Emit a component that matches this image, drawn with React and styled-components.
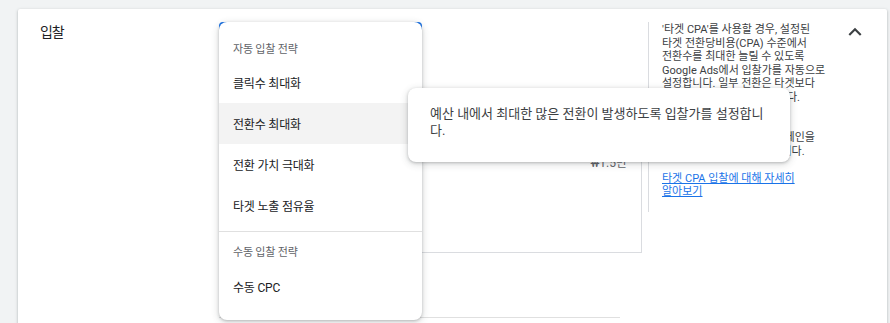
import React from "react";
import styled, { createGlobalStyle } from "styled-components";

const GlobalStyle = createGlobalStyle`
  body {
    margin: 0;
    background: #f1f3f4;
    font-family: Roboto, "Noto Sans CJK KR", sans-serif;
    color: #202124;
    overflow: hidden;
  }
`;

const Page = styled.div`
  padding: 9px 3px 0 18px;
  height: 323px;
  box-sizing: border-box;
`;

const Card = styled.div`
  background: #fff;
  border-radius: 2px 2px 0 0;
  box-shadow: 0 1px 2px rgba(60, 64, 67, 0.25), 0 1px 3px 1px rgba(60, 64, 67, 0.1);
  height: 330px;
  padding: 13px 0 0 22px;
  box-sizing: border-box;
  display: grid;
  grid-template-columns: 179px 423px 187px 1fr;
`;

const Label = styled.div`
  font-size: 14px;
  letter-spacing: -1.2px;
  line-height: 20px;
  color: #202124;
`;

const Middle = styled.div`
  position: relative;
`;

const Select = styled.div`
  width: 203px;
  height: 36px;
  border: 2px solid #1a73e8;
  border-radius: 4px;
  box-sizing: border-box;
`;

const Menu = styled.div`
  position: absolute;
  top: 0;
  left: 0;
  width: 203px;
  background: #fff;
  border-radius: 8px;
  padding-bottom: 13px;
  box-shadow: 0 1px 3px rgba(60, 64, 67, 0.3), 0 2px 6px 2px rgba(60, 64, 67, 0.12);
  z-index: 2;
`;

const GroupHeader = styled.div`
  padding: ${(p) => (p.first ? "20px 14px 4px" : "13px 14px 5px")};
  font-size: 11px;
  letter-spacing: -0.2px;
  line-height: 16px;
  color: #5f6368;
`;

const Item = styled.div`
  height: 41px;
  display: flex;
  align-items: center;
  padding-left: 14px;
  font-size: 12px;
  letter-spacing: -0.2px;
  color: #202124;
  background: ${(p) => (p.active ? "#f3f3f3" : "transparent")};
`;

const Divider = styled.div`
  height: 1px;
  background: #e0e0e0;
  margin-top: 5px;
`;

const Tooltip = styled.div`
  position: absolute;
  left: 189px;
  top: 66px;
  width: 382px;
  height: 74px;
  box-sizing: border-box;
  padding: 17px 22px 0 22px;
  background: #fff;
  border-radius: 8px;
  box-shadow: 0 1px 3px rgba(60, 64, 67, 0.3), 0 2px 6px 2px rgba(60, 64, 67, 0.12);
  font-size: 13px;
  line-height: 17px;
  color: #3c4043;
  z-index: 3;
`;

const ValueBox = styled.div`
  margin-top: 42px;
  height: 153px;
  border: 1px solid #dadce0;
  box-sizing: border-box;
  padding: 55px 14px 0 0;
  text-align: right;
  font-size: 12px;
  line-height: 14px;
  color: #5f6368;
`;

const NextField = styled.div`
  margin-top: 64px;
  width: 401px;
  border-top: 1px solid #e0e0e0;
`;

const Help = styled.div`
  align-self: start;
  margin-left: 6px;
  height: 190px;
  border-left: 1px solid #dadce0;
  padding: 1px 0 0 13px;
  box-sizing: border-box;
  font-size: 11px;
  line-height: 13.5px;
  color: #3c4043;
  white-space: nowrap;
`;

const HelpLink = styled.a`
  display: block;
  margin-top: 13.5px;
  color: #1a73e8;
  text-decoration: underline;
`;

const Toggle = styled.div`
  margin-top: -3px;
  padding-left: 13px;
  color: #3c4043;
`;

function Chevron() {
  return (
    <svg width="26" height="26" viewBox="0 0 24 24" fill="currentColor">
      <path d="M12 8l-6 6 1.41 1.41L12 10.83l4.59 4.58L18 14z" />
    </svg>
  );
}

const autoItems = ["클릭수 최대화", "전환수 최대화", "전환 가치 극대화", "타겟 노출 점유율"];

export default function App() {
  return (
    <>
      <GlobalStyle />
      <Page>
        <Card>
          <Label>입찰</Label>
          <Middle>
            <Select />
            <ValueBox>₩1.5만</ValueBox>
            <NextField />
            <Menu>
              <GroupHeader first>자동 입찰 전략</GroupHeader>
              {autoItems.map((t) => (
                <Item key={t} active={t === "전환수 최대화"}>
                  {t}
                </Item>
              ))}
              <Divider />
              <GroupHeader>수동 입찰 전략</GroupHeader>
              <Item>수동 CPC</Item>
            </Menu>
            <Tooltip>예산 내에서 최대한 많은 전환이 발생하도록 입찰가를 설정합니다.</Tooltip>
          </Middle>
          <Help>
            '타겟 CPA'를 사용할 경우, 설정된
            <br />
            타겟 전환당비용(CPA) 수준에서
            <br />
            전환수를 최대한 늘릴 수 있도록
            <br />
            Google Ads에서 입찰가를 자동으로
            <br />
            설정합니다. 일부 전환은 타겟보다
            <br />
            비용이 조금 더 들 수 있습니다.
            <br />
            이 전략을 사용하면 여러
            <br />
            캠페인에서 동일한 타겟
            <br />
            동일한 타겟 CPA로 여러 캠페인을
            <br />
            한꺼번에 관리할 수도 있습니다.
            <HelpLink href="#">
              타겟 CPA 입찰에 대해 자세히
              <br />
              알아보기
            </HelpLink>
          </Help>
          <Toggle>
            <Chevron />
          </Toggle>
        </Card>
      </Page>
    </>
  );
}
